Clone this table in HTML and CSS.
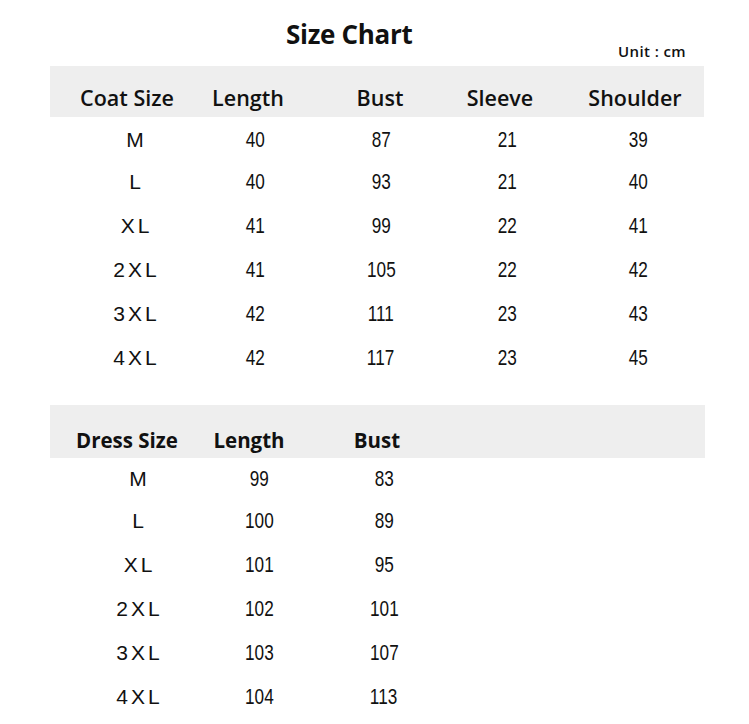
FILE: index.html
```html
<!DOCTYPE html>
<html>
<head>
<meta charset="utf-8">
<link rel="stylesheet" href="styles.css">
</head>
<body>
<div class="page">
  <div class="top">
    <h1 class="title">Size Chart</h1>
    <div class="unit">Unit : cm</div>
  </div>

  <section class="table coat">
    <div class="head">
      <span>Coat Size</span><span>Length</span><span>Bust</span><span>Sleeve</span><span>Shoulder</span>
    </div>
    <div class="row first"><span class="sz">M</span><span class="n">40</span><span class="n">87</span><span class="n">21</span><span class="n">39</span></div>
    <div class="row"><span class="sz">L</span><span class="n">40</span><span class="n">93</span><span class="n">21</span><span class="n">40</span></div>
    <div class="row"><span class="sz">XL</span><span class="n">41</span><span class="n">99</span><span class="n">22</span><span class="n">41</span></div>
    <div class="row"><span class="sz">2XL</span><span class="n">41</span><span class="n">105</span><span class="n">22</span><span class="n">42</span></div>
    <div class="row"><span class="sz">3XL</span><span class="n">42</span><span class="n">111</span><span class="n">23</span><span class="n">43</span></div>
    <div class="row"><span class="sz">4XL</span><span class="n">42</span><span class="n">117</span><span class="n">23</span><span class="n">45</span></div>
  </section>

  <section class="table dress">
    <div class="head">
      <span>Dress Size</span><span>Length</span><span>Bust</span>
    </div>
    <div class="row first"><span class="sz">M</span><span class="n">99</span><span class="n">83</span></div>
    <div class="row"><span class="sz">L</span><span class="n">100</span><span class="n">89</span></div>
    <div class="row"><span class="sz">XL</span><span class="n">101</span><span class="n">95</span></div>
    <div class="row"><span class="sz">2XL</span><span class="n">102</span><span class="n">101</span></div>
    <div class="row"><span class="sz">3XL</span><span class="n">103</span><span class="n">107</span></div>
    <div class="row"><span class="sz">4XL</span><span class="n">104</span><span class="n">113</span></div>
  </section>
</div>
</body>
</html>
```

FILE: styles.css
```css
* { box-sizing: border-box; }
html, body { margin: 0; padding: 0; background: #ffffff; }
body { color: #111; font-family: "Liberation Sans", Arial, sans-serif; }

.page { width: 749px; height: 724px; overflow: hidden; padding-top: 17px; }

.top { position: relative; height: 49px; }
.title {
  margin: 0 0 0 286px;
  font-family: "Open Sans", sans-serif;
  font-weight: 700;
  font-size: 26px;
  line-height: 34px;
  letter-spacing: -0.3px;
  color: #111;
}
.unit {
  position: absolute;
  left: 618px;
  top: 24px;
  font-family: "Open Sans", sans-serif;
  font-weight: 600;
  font-size: 15px;
  line-height: 20px;
  letter-spacing: 0.4px;
  color: #111;
}

.table { margin-left: 50px; width: 654px; }
.dress { margin-top: 25px; width: 655px; }

.head {
  display: grid;
  height: 51px;
  align-items: center;
  background: #eeeeee;
  font-family: "Open Sans", sans-serif;
  font-weight: 600;
  font-size: 21.5px;
  padding-top: 11px;
  color: #111;
}
.head span, .row span { justify-self: unsafe center; white-space: nowrap; }

.coat .head { grid-template-columns: 154px 88px 176px 64px 206px; }
.coat .row  { grid-template-columns: 170px 70px 182px 70px 192px; }
.dress .head { grid-template-columns: 154px 90px 166px; font-weight: 700; font-size: 20.5px; height: 53px; padding-top: 17px; }
.dress .row  { grid-template-columns: 176px 66px 184px; }

.row {
  display: grid;
  height: 44px;
  align-items: center;
  font-size: 20px;
}
.row.first { height: 40px; margin-top: 3px; }
.dress .row.first { margin-top: 1px; }

.sz { letter-spacing: 3px; margin-right: -3px; font-size: 21px; }
.n { display: inline-block; transform: scaleX(0.78); font-size: 22px; }
```
